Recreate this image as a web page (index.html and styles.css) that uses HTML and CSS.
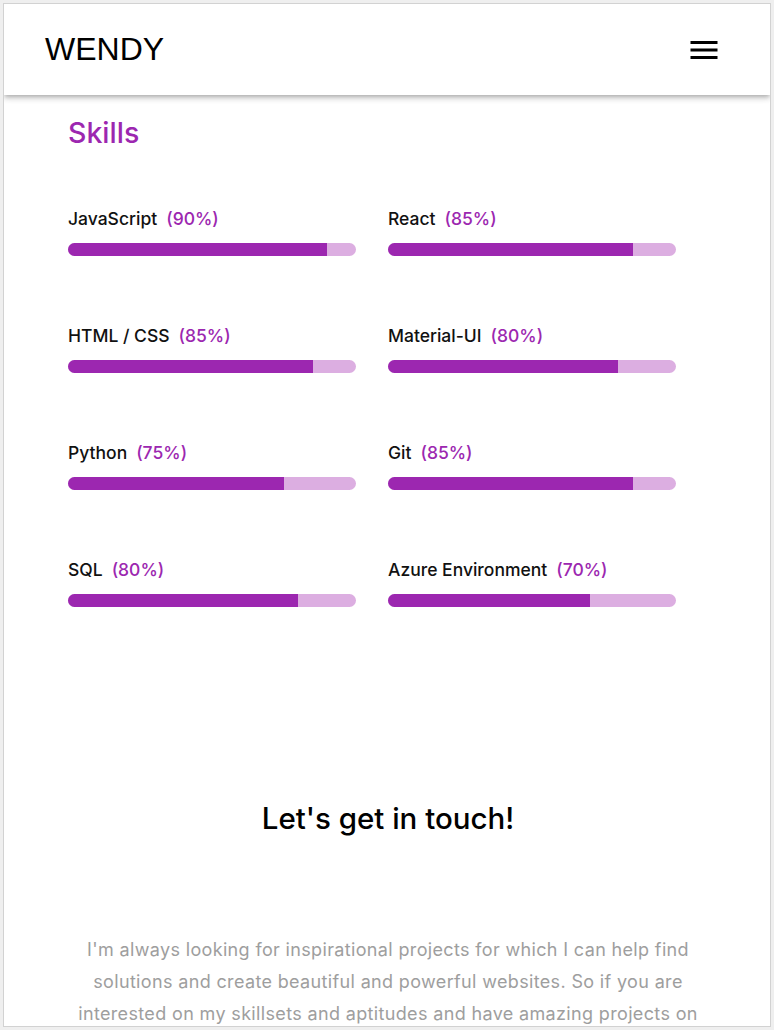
FILE: index.html
```html
<!DOCTYPE html>
<html lang="en">
<head>
<meta charset="utf-8">
<title>Wendy</title>
<link rel="stylesheet" href="styles.css">
</head>
<body>
<div class="frame">
  <header class="appbar">
    <div class="brand">WENDY</div>
    <button class="menu" aria-label="menu">
      <svg viewBox="0 0 24 24" width="36" height="36"><path d="M3 18h18v-2H3v2zm0-5h18v-2H3v2zm0-7v2h18V6H3z" fill="#000"/></svg>
    </button>
  </header>
  <main>
    <section class="skills">
      <h2 class="section-title">Skills</h2>
      <div class="skill-grid">
        <div class="skill"><div class="skill-label"><span class="name">JavaScript</span><span class="pct">(90%)</span></div><div class="track"><div class="fill" style="width:90%"></div></div></div>
        <div class="skill"><div class="skill-label"><span class="name">React</span><span class="pct">(85%)</span></div><div class="track"><div class="fill" style="width:85%"></div></div></div>
        <div class="skill"><div class="skill-label"><span class="name">HTML / CSS</span><span class="pct">(85%)</span></div><div class="track"><div class="fill" style="width:85%"></div></div></div>
        <div class="skill"><div class="skill-label"><span class="name">Material-UI</span><span class="pct">(80%)</span></div><div class="track"><div class="fill" style="width:80%"></div></div></div>
        <div class="skill"><div class="skill-label"><span class="name">Python</span><span class="pct">(75%)</span></div><div class="track"><div class="fill" style="width:75%"></div></div></div>
        <div class="skill"><div class="skill-label"><span class="name">Git</span><span class="pct">(85%)</span></div><div class="track"><div class="fill" style="width:85%"></div></div></div>
        <div class="skill"><div class="skill-label"><span class="name">SQL</span><span class="pct">(80%)</span></div><div class="track"><div class="fill" style="width:80%"></div></div></div>
        <div class="skill"><div class="skill-label"><span class="name">Azure Environment</span><span class="pct">(70%)</span></div><div class="track"><div class="fill" style="width:70%"></div></div></div>
      </div>
    </section>
    <section class="contact">
      <h2 class="contact-title">Let's get in touch!</h2>
      <p class="contact-text">I'm always looking for inspirational projects for which I can help find solutions and create beautiful and powerful websites. So if you are interested on my skillsets and aptitudes and have amazing projects on mind, feel free to contact me.</p>
    </section>
  </main>
</div>
</body>
</html>
```
FILE: styles.css
```css
html, body {
  margin: 0;
  padding: 0;
}
body {
  background: #efefef;
  padding: 3px;
  font-family: "Inter", "Noto Sans", sans-serif;
  color: #111;
}
.frame {
  box-sizing: border-box;
  height: 1024px;
  border: 1px solid #d2d2d2;
  background: #fff;
  overflow: hidden;
}
.appbar {
  height: 91px;
  display: flex;
  align-items: center;
  justify-content: space-between;
  padding: 0 48px 0 41px;
  background: #fff;
  box-shadow: 0 2px 4px -1px rgba(0,0,0,0.2), 0 4px 5px 0 rgba(0,0,0,0.14), 0 1px 10px 0 rgba(0,0,0,0.06);
  position: relative;
  z-index: 1;
}
.brand {
  font-family: "Liberation Sans", Arial, sans-serif;
  font-size: 32px;
  color: #000;
}
.menu {
  border: 0;
  background: none;
  padding: 0;
  width: 36px;
  height: 36px;
  display: block;
}
.menu svg { display: block; }

.skills {
  width: 640px;
  margin: 0 0 0 64px;
  padding-top: 21px;
}
.section-title {
  margin: 0;
  font-size: 28.5px;
  line-height: 34px;
  font-weight: 500;
  color: #9c27b0;
}
.skill-grid {
  display: grid;
  grid-template-columns: 1fr 1fr;
  row-gap: 66.5px;
  margin-top: 55px;
}
.skill-label {
  display: flex;
  gap: 9px;
  font-size: 17.5px;
  line-height: 27px;
  font-weight: 500;
}
.pct { color: #9c27b0; }
.track {
  width: 90%;
  height: 13px;
  margin-top: 10.5px;
  border-radius: 7px;
  background: #dcaee1;
  overflow: hidden;
}
.fill {
  height: 100%;
  background: #9c27b0;
}

.contact {
  width: 640px;
  margin: 0 0 0 64px;
  text-align: center;
  padding-top: 191px;
}
.contact-title {
  margin: 0;
  font-size: 29.5px;
  line-height: 41px;
  font-weight: 500;
  color: #000;
}
.contact-text {
  margin: 95px auto 0;
  max-width: 640px;
  font-size: 18px;
  letter-spacing: 0.35px;
  line-height: 32px;
  color: #9e9e9e;
}
```
